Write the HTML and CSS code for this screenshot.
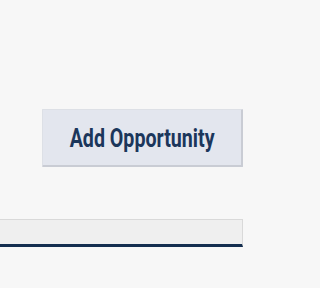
FILE: index.html
```
<!DOCTYPE html>
<html>
<head>
<meta charset="utf-8">
<link rel="stylesheet" href="styles.css">
</head>
<body>
<div class="page">
  <div class="actions">
    <button class="add-btn"><span class="label">Add Opportunity</span></button>
  </div>
  <div class="bar"></div>
</div>
</body>
</html>
```
FILE: styles.css
```
html, body {
  margin: 0;
  padding: 0;
}
body {
  background: #f7f7f7;
  width: 288px;
  height: 288px;
  overflow: hidden;
}
.page {
  display: flex;
  flex-direction: column;
  padding-top: 109px;
}
.actions {
  display: flex;
  padding-left: 42px;
}
.add-btn {
  box-sizing: border-box;
  width: 201px;
  height: 58px;
  background: #e3e6ee;
  border: 1px solid #dde0e6;
  border-right: 2px solid #c9ccd4;
  border-bottom: 2px solid #c9ccd4;
  border-radius: 1px;
  padding: 0;
  display: flex;
  align-items: center;
  justify-content: center;
  white-space: nowrap;
}
.label {
  display: inline-block;
  font-family: Roboto, "DejaVu Sans", sans-serif;
  font-weight: 700;
  font-size: 25.5px;
  line-height: 1;
  color: #1b365b;
  transform: scaleX(0.77);
  margin-top: 2px;
}
.bar {
  box-sizing: border-box;
  margin-top: 52px;
  width: 243px;
  height: 28px;
  background: #efefef;
  border: 1px solid #d9d9d9;
  border-left: none;
  border-bottom: 3px solid #142e4f;
}
```
